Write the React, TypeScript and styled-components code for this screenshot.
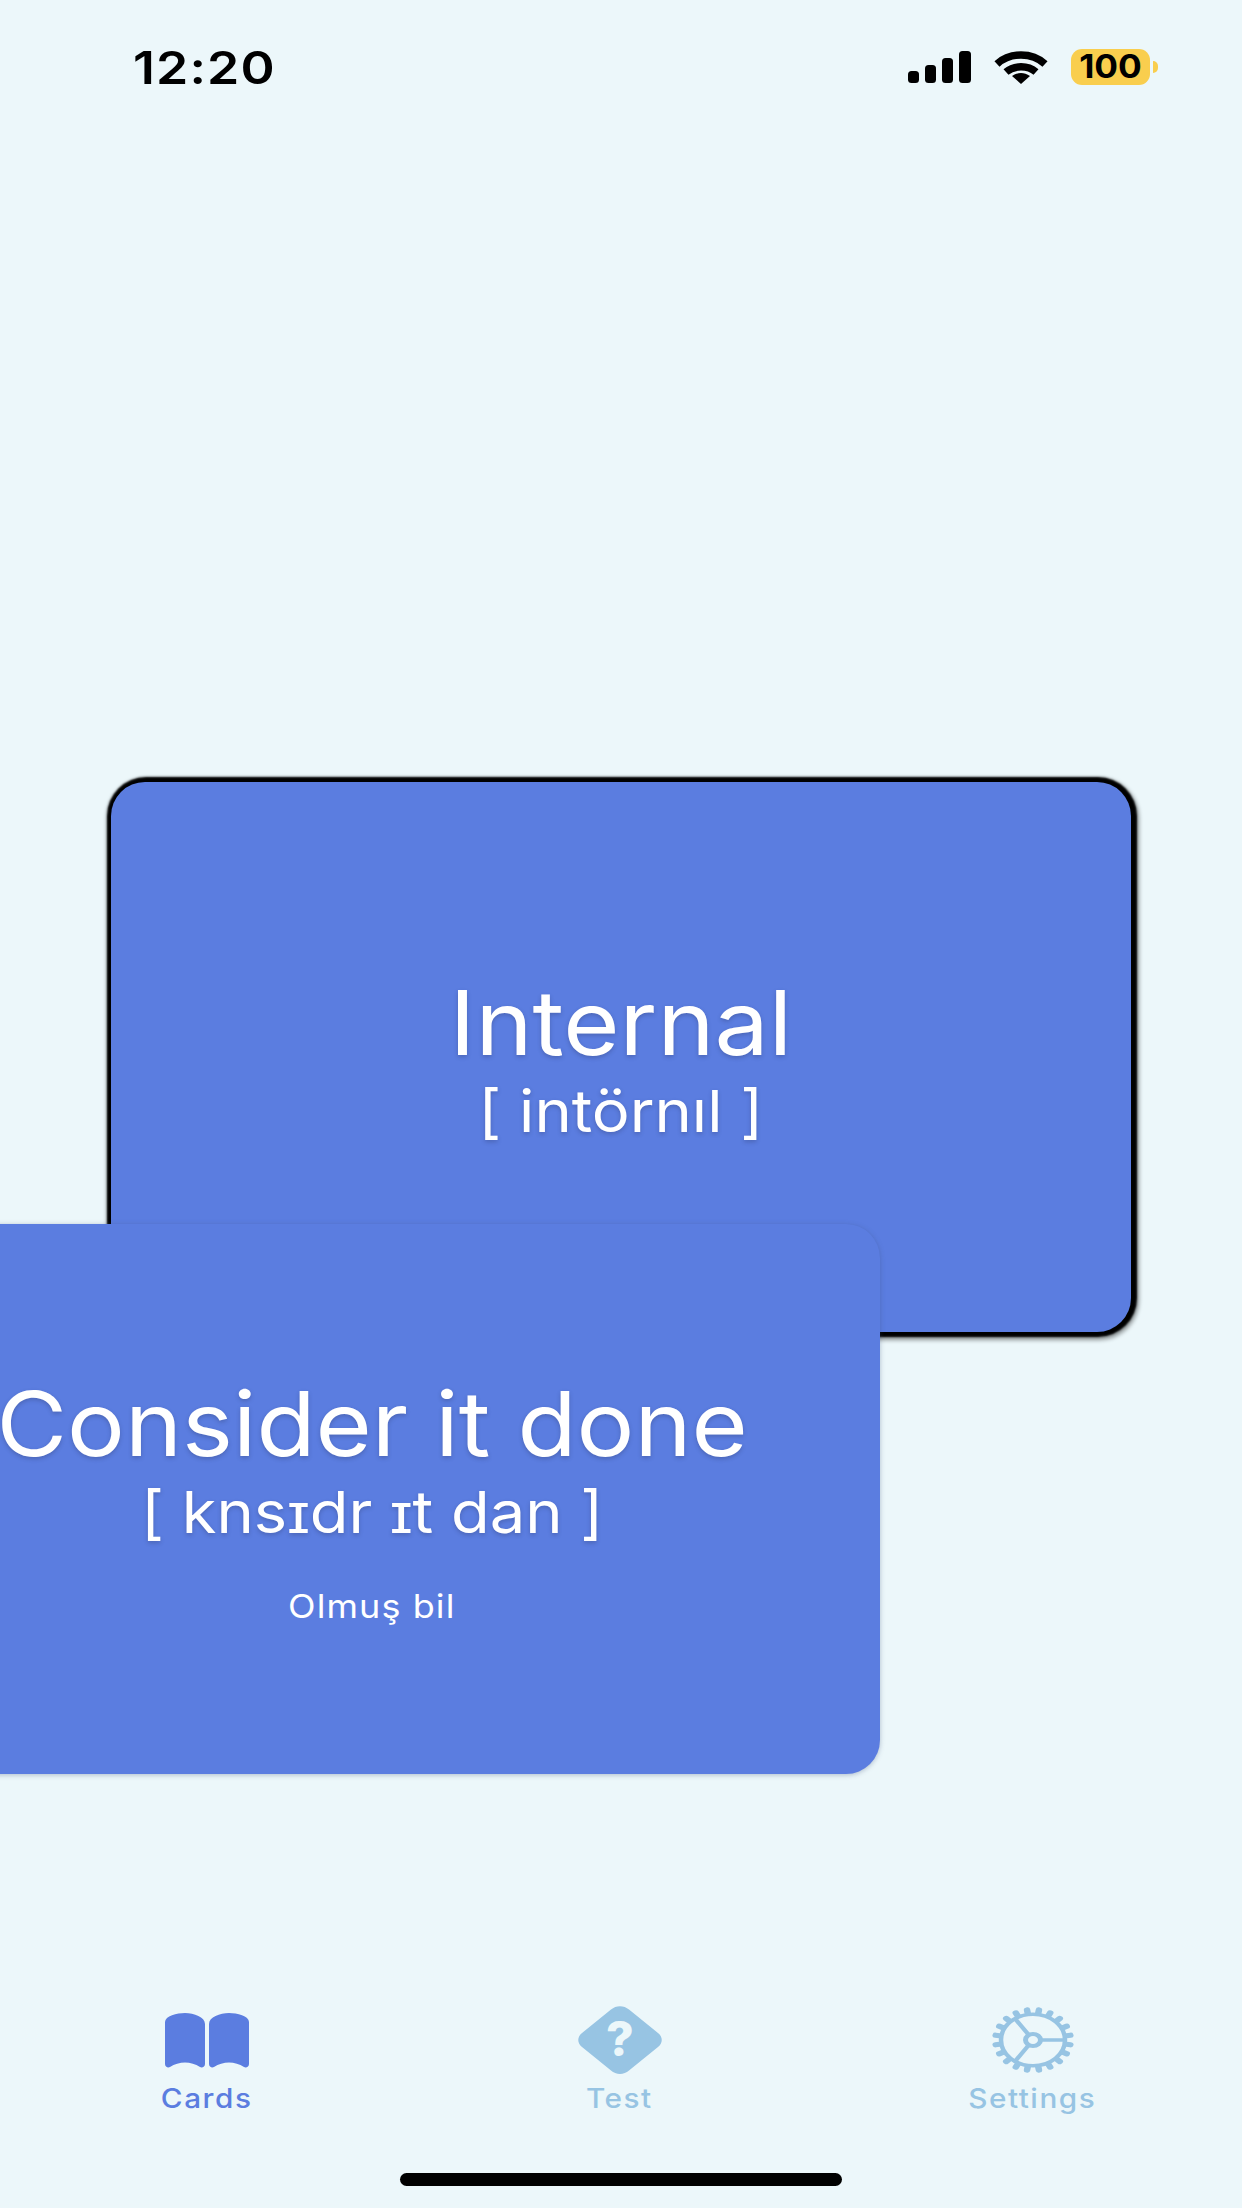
import React from 'react';
import styled, { createGlobalStyle } from 'styled-components';

const GlobalStyle = createGlobalStyle`
  html, body {
    margin: 0;
    padding: 0;
    background: #ecf7fa;
  }
  * {
    box-sizing: border-box;
  }
`;

const Screen = styled.div`
  position: relative;
  width: 1242px;
  height: 2208px;
  overflow: hidden;
  display: flex;
  flex-direction: column;
  background: #ecf7fa;
  font-family: Inter, "Liberation Sans", sans-serif;
`;

const StatusBar = styled.div`
  height: 134px;
  padding: 49px 92px 0 133px;
  display: flex;
  justify-content: space-between;
  align-items: flex-start;
`;

// the screenshot's type runs wider than Inter, so the texts get a scaleX
const Time = styled.div`
  font-size: 45px;
  line-height: 38px;
  font-weight: 600;
  letter-spacing: 1px;
  color: #000;
  transform: scaleX(1.15);
  transform-origin: left center;
`;

const StatusIcons = styled.div`
  display: flex;
  align-items: center;
  gap: 23px;
  height: 36px;
`;

const Battery = styled.div`
  position: relative;
  width: 79px;
  height: 36px;
  border-radius: 11px;
  background: #f9ce4e;
  display: flex;
  justify-content: center;

  &::after {
    content: '';
    position: absolute;
    right: -8px;
    top: 12px;
    width: 5px;
    height: 12px;
    border-radius: 0 6px 6px 0;
    background: #f9ce4e;
  }
`;

const BatteryLevel = styled.span`
  color: #000;
  font-size: 32px;
  font-weight: 700;
  line-height: 36px;
  transform: scaleX(1.1);
`;

const CardArea = styled.main`
  position: relative;
  flex: 1;
  padding: 648px 111px 0;
`;

const Card = styled.section<{ $front?: boolean }>`
  height: 550px;
  border-radius: 34px;
  background: #5b7de0;
  color: #fff;
  display: flex;
  flex-direction: column;
  align-items: center;
  justify-content: center;
  box-shadow: ${p =>
    p.$front
      ? '0 1px 5px rgba(60, 80, 120, 0.35)'
      : '1px 0 2px 5px #000, 2px 2px 4px 6px rgba(0, 0, 0, 0.4)'};
`;

const FrontCard = styled(Card)`
  position: absolute;
  left: -136px;
  top: 1090px;
  width: 1016px;
`;

const Word = styled.h2`
  margin: 0;
  font-size: 89px;
  line-height: 104px;
  font-weight: 400;
  white-space: nowrap;
  transform: scaleX(1.085);
  text-shadow: 0 2px 4px rgba(40, 50, 90, 0.3);
`;

const Phonetic = styled.div`
  font-size: 58px;
  line-height: 68px;
  font-weight: 400;
  white-space: nowrap;
  transform: translateY(2px) scaleX(1.09);
  text-shadow: 0 2px 4px rgba(40, 50, 90, 0.3);
`;

const Meaning = styled.div`
  margin-top: 42px;
  font-size: 33px;
  line-height: 40px;
  font-weight: 400;
  letter-spacing: 1px;
  transform: scaleX(1.09);
`;

const TabBar = styled.nav`
  height: 168px;
  padding-right: 3px;
  display: grid;
  grid-template-columns: repeat(3, 1fr);
`;

const Tab = styled.div<{ $active?: boolean }>`
  display: flex;
  flex-direction: column;
  align-items: center;
  color: ${p => (p.$active ? '#5b7de0' : '#97c4e3')};
`;

const IconSlot = styled.div`
  height: 70px;
  display: flex;
  align-items: center;
  justify-content: center;
`;

const TabLabel = styled.span`
  margin-top: 8px;
  font-size: 27px;
  line-height: 32px;
  font-weight: 500;
  letter-spacing: 1.4px;
  transform: scaleX(1.1);
`;

const HomeBarRow = styled.div`
  height: 35px;
  display: flex;
  justify-content: center;
`;

const HomeBar = styled.div`
  width: 442px;
  height: 13px;
  border-radius: 7px;
  background: #000;
`;

const SignalIcon = () => (
  <svg width="63" height="32" viewBox="0 0 63 32">
    <rect x="0" y="20" width="11" height="12" rx="3.5" />
    <rect x="17" y="14" width="11" height="18" rx="3.5" />
    <rect x="34" y="7" width="11" height="25" rx="3.5" />
    <rect x="51" y="0" width="12" height="32" rx="3.5" />
  </svg>
);

const WifiIcon = () => (
  <svg width="54" height="33" viewBox="0 0 54 33" fill="none" stroke="#000" strokeWidth="7.5">
    <path d="M3 13 C16 1 38 1 51 13" />
    <path d="M12 21 C20 14 34 14 42 21" />
    <path d="M18 25 L27 33 L36 25 C30 21 24 21 18 25 Z" fill="#000" stroke="none" />
  </svg>
);

const BookIcon = () => (
  <svg width="84" height="55" viewBox="0 0 84 55" fill="currentColor">
    <path d="M0 9 C0 3 12 0 20 0 C29 0 40 4 40 11 L40 51 C40 54 37 55 35 54 C26 48 14 48 5 54 C3 55 0 54 0 51 Z" />
    <path d="M84 9 C84 3 72 0 64 0 C55 0 44 4 44 11 L44 51 C44 54 47 55 49 54 C58 48 70 48 79 54 C81 55 84 54 84 51 Z" />
  </svg>
);

const QuestionIcon = () => (
  <svg width="84" height="68" viewBox="0 0 84 68">
    <path
      d="M33 3.5 C38 -1 46 -1 51 3.5 L80 27 C85 31 85 37 80 41 L51 64.5 C46 69 38 69 33 64.5 L4 41 C-1 37 -1 31 4 27 Z"
      fill="currentColor"
    />
    <text
      x="42"
      y="50"
      textAnchor="middle"
      fontFamily="Inter, sans-serif"
      fontSize="48"
      fontWeight="800"
      fill="#ecf7fa"
    >
      ?
    </text>
  </svg>
);

const teeth = Array.from({ length: 20 }, (_, i) => i * 18 + 9);

const GearIcon = () => (
  <svg width="82" height="66" viewBox="0 0 82 82" preserveAspectRatio="none" fill="none" stroke="currentColor">
    <circle cx="41" cy="41" r="32" strokeWidth="4.5" />
    <circle cx="41" cy="41" r="7.5" strokeWidth="5" />
    <path d="M48 41 H74 M37 35 L22 13 M37 47 L22 69" strokeWidth="4.5" />
    {teeth.map(a => (
      <rect
        key={a}
        x="37.75"
        y="0"
        width="6.5"
        height="10"
        rx="3"
        fill="currentColor"
        stroke="none"
        transform={`rotate(${a} 41 41)`}
      />
    ))}
  </svg>
);

const App: React.FC = () => (
  <Screen>
    <GlobalStyle />
    <StatusBar>
      <Time>12:20</Time>
      <StatusIcons>
        <SignalIcon />
        <WifiIcon />
        <Battery>
          <BatteryLevel>100</BatteryLevel>
        </Battery>
      </StatusIcons>
    </StatusBar>

    <CardArea>
      <Card>
        <Word>Internal</Word>
        <Phonetic>[ intörnıl ]</Phonetic>
      </Card>
      <FrontCard $front>
        <Word>Consider it done</Word>
        <Phonetic>[ knsɪdr ɪt dan ]</Phonetic>
        <Meaning>Olmuş bil</Meaning>
      </FrontCard>
    </CardArea>

    <TabBar>
      <Tab $active>
        <IconSlot>
          <BookIcon />
        </IconSlot>
        <TabLabel>Cards</TabLabel>
      </Tab>
      <Tab>
        <IconSlot>
          <QuestionIcon />
        </IconSlot>
        <TabLabel>Test</TabLabel>
      </Tab>
      <Tab>
        <IconSlot>
          <GearIcon />
        </IconSlot>
        <TabLabel>Settings</TabLabel>
      </Tab>
    </TabBar>
    <HomeBarRow>
      <HomeBar />
    </HomeBarRow>
  </Screen>
);

export default App;
